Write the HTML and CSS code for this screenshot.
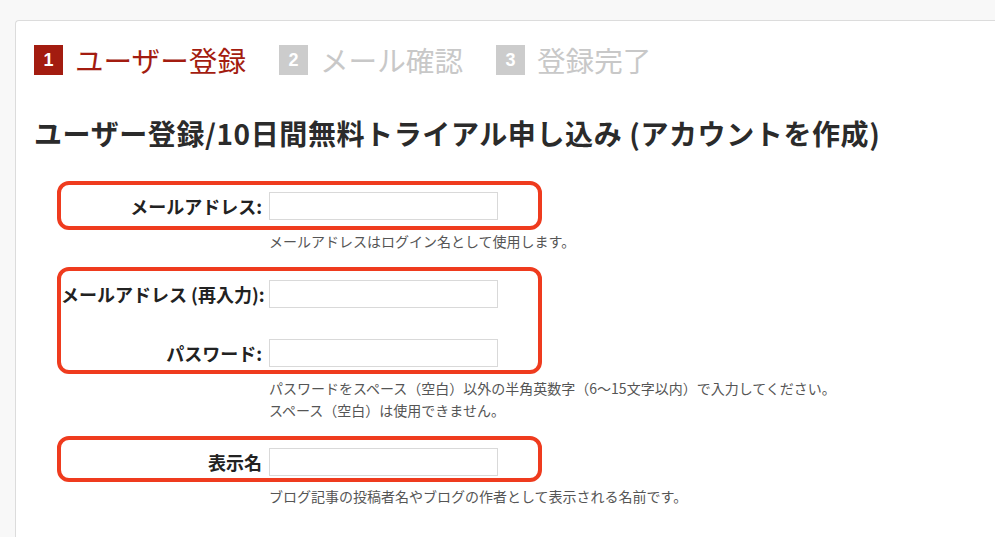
FILE: index.html
```html
<!DOCTYPE html>
<html lang="ja">
<head>
<meta charset="utf-8">
<title>ユーザー登録</title>
<link rel="stylesheet" href="styles.css">
</head>
<body>
<div class="card">
  <ol class="steps">
    <li class="step active"><span class="num">1</span><span class="label">ユーザー登録</span></li>
    <li class="step"><span class="num">2</span><span class="label">メール確認</span></li>
    <li class="step"><span class="num">3</span><span class="label">登録完了</span></li>
  </ol>
  <h1 class="title">ユーザー登録/10日間無料トライアル申し込み (アカウントを作成)</h1>
  <form class="form">
    <div class="group g1">
      <div class="row"><label class="lbl">メールアドレス:</label><input class="field" type="text"></div>
    </div>
    <p class="hint">メールアドレスはログイン名として使用します。</p>
    <div class="group g2">
      <div class="row"><label class="lbl">メールアドレス (再入力):</label><input class="field" type="text"></div>
      <div class="row"><label class="lbl">パスワード:</label><input class="field" type="password"></div>
    </div>
    <p class="hint">パスワードをスペース（空白）以外の半角英数字（6〜15文字以内）で入力してください。<br>スペース（空白）は使用できません。</p>
    <div class="group g3">
      <div class="row"><label class="lbl">表示名</label><input class="field" type="text"></div>
    </div>
    <p class="hint">ブログ記事の投稿者名やブログの作者として表示される名前です。</p>
  </form>
</div>
</body>
</html>
```
FILE: styles.css
```css
html, body {
  margin: 0;
  padding: 0;
  background: #f8f8f8;
  font-family: "Noto Sans CJK JP", "Liberation Sans", sans-serif;
  color: #2b2b2b;
  overflow: hidden;
}
.card {
  margin: 20px 0 0 15px;
  background: #fff;
  border: 1px solid #dcdcdc;
  border-right: none;
  border-radius: 4px 0 0 0;
  padding: 24px 18px 40px 18px;
  min-height: 600px;
}
.steps {
  list-style: none;
  margin: 0;
  padding: 0;
  display: flex;
  align-items: center;
  gap: 33px;
}
.step {
  display: flex;
  align-items: center;
  gap: 12px;
}
.num {
  width: 29px;
  height: 30px;
  background: #cccccc;
  color: #fff;
  font-family: "Liberation Sans", sans-serif;
  font-weight: bold;
  font-size: 18px;
  display: flex;
  align-items: center;
  justify-content: center;
}
.step .label {
  font-size: 28.6px;
  line-height: 30px;
  color: #c8c8c8;
}
.step.active .num { background: #a31c10; }
.step.active .label { color: #a31c10; }
.title {
  margin: 38px 0 0 0;
  font-size: 28px;
  line-height: 40px;
  font-weight: bold;
  color: #2b2b2b;
  letter-spacing: 0.6px;
}
.form {
  margin: 28px 0 0 23px;
}
.group {
  width: 485px;
  border: 4px solid #ef3b1e;
  border-radius: 12px;
  box-sizing: border-box;
  padding: 0;
  display: flex;
  flex-direction: column;
}
.g1 { padding-top: 7px; padding-bottom: 6px; }
.g2 { padding-top: 9px; padding-bottom: 3px; gap: 31px; }
.g3 { padding-top: 8px; padding-bottom: 2px; }
.row {
  display: flex;
  align-items: center;
  gap: 7px;
}
.lbl {
  width: 201px;
  flex: none;
  text-align: right;
  font-size: 18px;
  font-weight: bold;
  line-height: 28px;
  color: #222;
  white-space: nowrap;
}
.field {
  flex: none;
  width: 229px;
  height: 28px;
  box-sizing: border-box;
  border: 1px solid #d9d9d9;
  background: #fff;
  margin: 0;
  padding: 2px 4px;
}
.hint {
  margin: 0 0 0 212px;
  font-size: 14px;
  line-height: 22px;
  color: #555;
  padding: 0;
}
.g1 + .hint { margin-bottom: 15px; padding-top: 0; }
.g2 + .hint { margin-bottom: 15px; padding-top: 3px; }
.g3 + .hint { padding-top: 3px; }
```
